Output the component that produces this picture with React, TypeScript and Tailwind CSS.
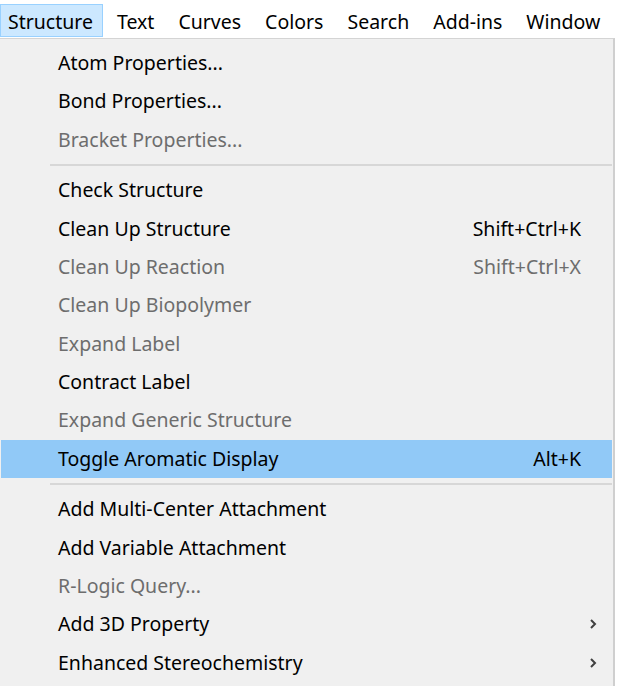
const font = { fontFamily: '"Noto Sans", "Open Sans", sans-serif' };

type Item =
  | { sep: true }
  | { label: string; disabled?: boolean; shortcut?: string; sub?: boolean; active?: boolean; sep?: false };

const items: Item[] = [
  { label: "Atom Properties..." },
  { label: "Bond Properties..." },
  { label: "Bracket Properties...", disabled: true },
  { sep: true },
  { label: "Check Structure" },
  { label: "Clean Up Structure", shortcut: "Shift+Ctrl+K" },
  { label: "Clean Up Reaction", shortcut: "Shift+Ctrl+X", disabled: true },
  { label: "Clean Up Biopolymer", disabled: true },
  { label: "Expand Label", disabled: true },
  { label: "Contract Label" },
  { label: "Expand Generic Structure", disabled: true },
  { label: "Toggle Aromatic Display", shortcut: "Alt+K", active: true },
  { sep: true },
  { label: "Add Multi-Center Attachment" },
  { label: "Add Variable Attachment" },
  { label: "R-Logic Query...", disabled: true },
  { label: "Add 3D Property", sub: true },
  { label: "Enhanced Stereochemistry", sub: true },
];

const menus = ["Structure", "Text", "Curves", "Colors", "Search", "Add-ins", "Window"];

function Chevron() {
  return (
    <svg width="10" height="14" viewBox="0 0 10 14" fill="none">
      <path d="M3 3l4 4-4 4" stroke="#404040" strokeWidth="2" />
    </svg>
  );
}

export default function App() {
  return (
    <div className="w-[618px] h-[686px] overflow-hidden bg-white text-[19.5px] leading-none" style={font}>
      <div className="flex h-[38px] items-start pt-[4px] whitespace-nowrap">
        {menus.map((m, i) => (
          <div
            key={m}
            className={`h-[33px] shrink-0 flex items-center pl-[7px] pr-[9px] mr-[6px] pt-[3px] border ${
              i === 0 ? "bg-[#cce8ff] border-[#99d1ff]" : "border-transparent"
            }`}
          >
            {m}
          </div>
        ))}
      </div>
      <div className="w-[615px] h-[648px] bg-[#f0f0f0] border-t border-[#d4d4d4] border-r-[2px] border-r-[#cfcfcf] pt-[5px] pl-[1px] pr-[1px]">
        {items.map((it, i) =>
          it.sep ? (
            <div key={i} className="h-[12px] flex items-center pl-[49px]">
              <div className="w-full h-[2px] bg-[#d7d7d7]" />
            </div>
          ) : (
            <div
              key={i}
              className={`h-[38.4px] flex items-center pl-[57px] pr-[31px] pb-[1px] ${
                it.active ? "bg-[#91c9f7]" : ""
              } ${it.disabled ? "text-[#6d6d6d]" : "text-black"}`}
            >
              <span className="flex-1">{it.label}</span>
              {it.shortcut && <span>{it.shortcut}</span>}
              {it.sub && (
                <span className="mr-[-17px]">
                  <Chevron />
                </span>
              )}
            </div>
          )
        )}
      </div>
    </div>
  );
}
